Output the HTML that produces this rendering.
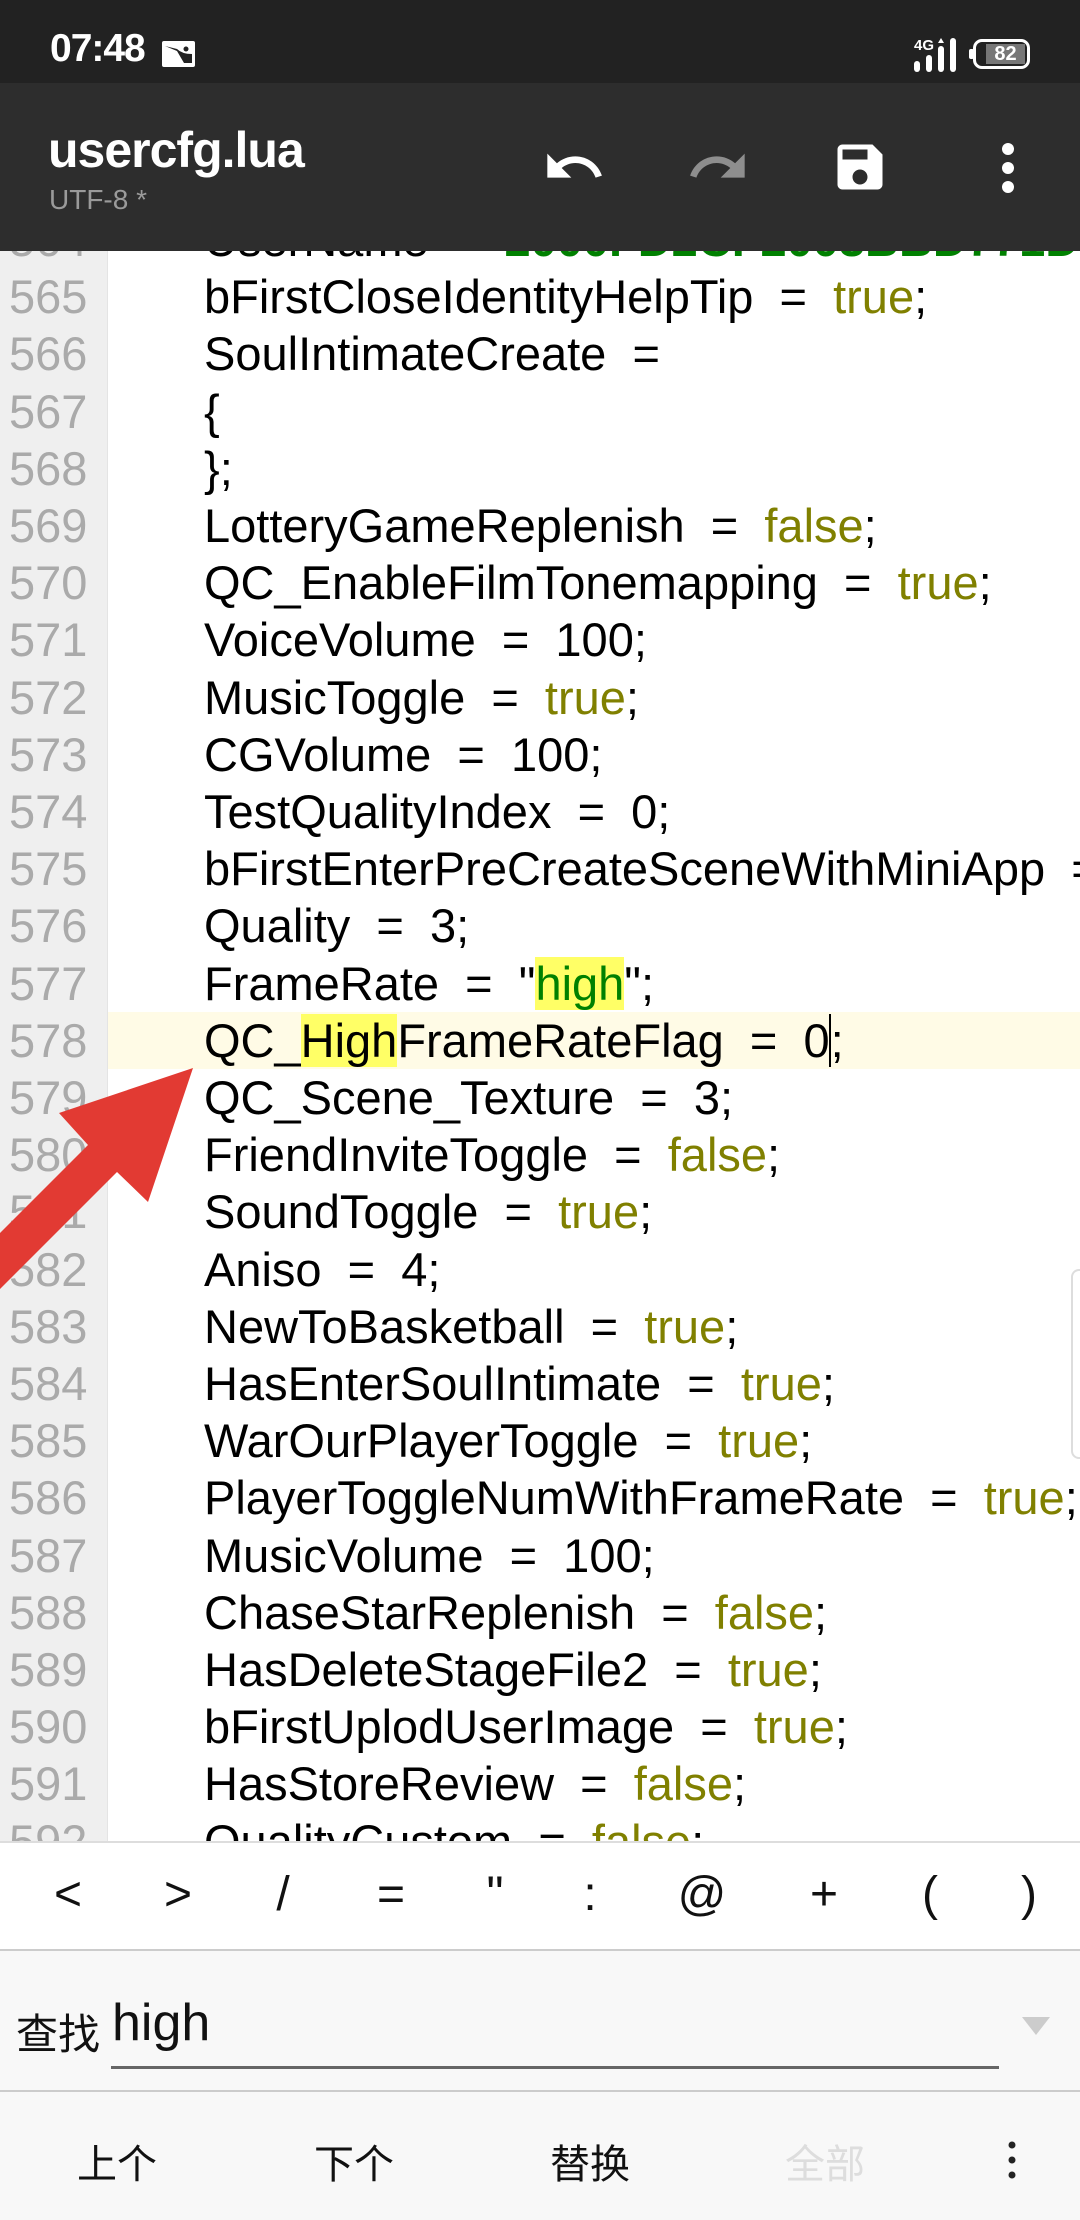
<!DOCTYPE html>
<html><head><meta charset="utf-8">
<style>
*{margin:0;padding:0;box-sizing:border-box}
body{width:1080px;height:2220px;overflow:hidden;background:#fff;font-family:"Liberation Sans","Noto Sans CJK SC",sans-serif;position:relative}
#sb{position:absolute;left:0;top:0;width:1080px;height:83px;background:#222}
#tb{position:absolute;left:0;top:83px;width:1080px;height:168px;background:#2d2d2d}
#code{position:absolute;left:0;top:251px;width:1080px;height:1590px;overflow:hidden;background:#fff}
#gut{position:absolute;left:0;top:0;width:108px;height:1590px;background:#efefef;border-right:1px solid #e4e4e4}
.ln{position:absolute;left:0;height:57.2px;width:1200px;font-size:47px;line-height:57.2px;white-space:pre}
.ln .n{position:absolute;left:9px;color:#aaa;width:98px;font-size:47px}
.ln .t{position:absolute;left:204px;color:#000}
.k{color:#808000}
.s{color:#008000}
.hl{background:#ffff66}
#cur{background:#fffbe6}
#sym{position:absolute;left:0;top:1841px;width:1080px;height:108px;background:#fff;border-top:2px solid #ddd}
#sym span{position:absolute;top:24px;font-size:48px;color:#111;transform:translateX(-50%)}
#find{position:absolute;left:0;top:1949px;width:1080px;height:143px;background:#f8f8f8;border-top:2px solid #ccc;border-bottom:2px solid #ccc}
#bot{position:absolute;left:0;top:2092px;width:1080px;height:128px;background:#f8f8f8}
#bot span{position:absolute;top:40px;font-size:40px;color:#111;transform:translateX(-50%)}
</style></head><body>
<div id="sb">
  <div style="position:absolute;left:50px;top:27px;color:#fff;font-size:39px;font-weight:bold;letter-spacing:-1px">07:48</div>
  <svg style="position:absolute;left:162px;top:41px" width="33" height="26" viewBox="0 0 33 26"><rect width="33" height="26" rx="2" fill="#fff"/><path d="M3 5 L15 10 L22 22 L30 22 L30 13 Q20 13 15 8 Z" fill="#222"/><circle cx="24" cy="8" r="2.5" fill="#222"/></svg>
  <div style="position:absolute;left:914px;top:37px;color:#fff;font-size:15px;font-weight:bold">4G</div>
  <svg style="position:absolute;left:914px;top:36px" width="46" height="36" viewBox="0 0 46 36"><rect x="0" y="25" width="6" height="11" rx="3" fill="#fff"/><rect x="12" y="19" width="6" height="17" rx="3" fill="#fff"/><rect x="24" y="10" width="6" height="26" rx="3" fill="#fff"/><path d="M24 7 L27 2 L30 7Z" fill="#fff"/><rect x="36" y="2" width="6" height="34" rx="3" fill="#fff"/></svg>
  <div style="position:absolute;left:973px;top:39px;width:57px;height:30px;border:3px solid #fff;border-radius:9px"></div>
  <div style="position:absolute;left:969px;top:49px;width:5px;height:10px;background:#fff;border-radius:2px"></div>
  <div style="position:absolute;left:986px;top:44px;width:39px;height:20px;background:#777;color:#fff;font-size:20px;line-height:20px;text-align:center;font-weight:bold">82</div>
</div>
<div id="tb">
  <div style="position:absolute;left:48px;top:38px;color:#fff;font-size:50px;font-weight:bold;letter-spacing:-1px">usercfg.lua</div>
  <div style="position:absolute;left:49px;top:101px;color:#9a9a9a;font-size:28px">UTF-8 *</div>
  <svg style="position:absolute;left:542px;top:52px" width="64" height="64" viewBox="0 0 24 24"><path fill="#fff" d="M12.5 8c-2.65 0-5.05.99-6.9 2.6L2 7v9h9l-3.620-3.62c1.39-1.16 3.16-1.88 5.12-1.88 3.54 0 6.55 2.31 7.6 5.5l2.37-.78C21.08 11.03 17.15 8 12.5 8z"/></svg>
  <svg style="position:absolute;left:686px;top:52px" width="64" height="64" viewBox="0 0 24 24"><path fill="#8e8e8e" d="M18.4 10.6C16.55 8.99 14.15 8 11.5 8c-4.65 0-8.58 3.03-9.960 7.22L3.9 16c1.05-3.19 4.05-5.5 7.6-5.5 1.95 0 3.73.72 5.12 1.88L13 16h9V7l-3.6 3.6z"/></svg>
  <svg style="position:absolute;left:830px;top:54px" width="60" height="60" viewBox="0 0 24 24"><path fill="#fff" d="M17 3H5c-1.11 0-2 .9-2 2v14c0 1.1.89 2 2 2h14c1.1 0 2-.9 2-2V7l-4-4zm-5 16c-1.66 0-3-1.34-3-3s1.34-3 3-3 3 1.34 3 3-1.34 3-3 3zm3-10H5V5h10v4z"/></svg>
  <svg style="position:absolute;left:996px;top:57px" width="24" height="56" viewBox="0 0 24 56"><circle cx="12" cy="9" r="6" fill="#fff"/><circle cx="12" cy="28" r="6" fill="#fff"/><circle cx="12" cy="47" r="6" fill="#fff"/></svg>
</div>
<div id="code">
  <div id="gut"></div>
  <div style="position:absolute;left:0;top:-40px;width:1080px">
    <div class="ln" style="top:0"><span class="n">564</span><span class="t">UserName = <span class="s" style="font-weight:bold">"2000FD2CF2003BBD771D0</span></span></div>
    <div class="ln" style="top:57.2px"><span class="n">565</span><span class="t">bFirstCloseIdentityHelpTip  =  <span class="k">true</span>;</span></div>
    <div class="ln" style="top:114.4px"><span class="n">566</span><span class="t">SoulIntimateCreate  =</span></div>
    <div class="ln" style="top:171.6px"><span class="n">567</span><span class="t">{</span></div>
    <div class="ln" style="top:228.8px"><span class="n">568</span><span class="t">};</span></div>
    <div class="ln" style="top:286px"><span class="n">569</span><span class="t">LotteryGameReplenish  =  <span class="k">false</span>;</span></div>
    <div class="ln" style="top:343.2px"><span class="n">570</span><span class="t">QC_EnableFilmTonemapping  =  <span class="k">true</span>;</span></div>
    <div class="ln" style="top:400.4px"><span class="n">571</span><span class="t">VoiceVolume  =  100;</span></div>
    <div class="ln" style="top:457.6px"><span class="n">572</span><span class="t">MusicToggle  =  <span class="k">true</span>;</span></div>
    <div class="ln" style="top:514.8px"><span class="n">573</span><span class="t">CGVolume  =  100;</span></div>
    <div class="ln" style="top:572px"><span class="n">574</span><span class="t">TestQualityIndex  =  0;</span></div>
    <div class="ln" style="top:629.2px"><span class="n">575</span><span class="t">bFirstEnterPreCreateSceneWithMiniApp  =</span></div>
    <div class="ln" style="top:686.4px"><span class="n">576</span><span class="t">Quality  =  3;</span></div>
    <div class="ln" style="top:743.6px"><span class="n">577</span><span class="t">FrameRate  =  "<span class="s hl">high</span>";</span></div>
    <div class="ln" id="cur" style="top:800.8px;left:108px"><span class="n" style="left:-99px">578</span><span class="t" style="left:96px">QC_<span class="hl">High</span>FrameRateFlag  =  0<span style="border-left:2px solid #000;margin-left:-1px"></span>;</span></div>
    <div class="ln" style="top:858px"><span class="n">579</span><span class="t">QC_Scene_Texture  =  3;</span></div>
    <div class="ln" style="top:915.2px"><span class="n">580</span><span class="t">FriendInviteToggle  =  <span class="k">false</span>;</span></div>
    <div class="ln" style="top:972.4px"><span class="n">581</span><span class="t">SoundToggle  =  <span class="k">true</span>;</span></div>
    <div class="ln" style="top:1029.6px"><span class="n">582</span><span class="t">Aniso  =  4;</span></div>
    <div class="ln" style="top:1086.8px"><span class="n">583</span><span class="t">NewToBasketball  =  <span class="k">true</span>;</span></div>
    <div class="ln" style="top:1144px"><span class="n">584</span><span class="t">HasEnterSoulIntimate  =  <span class="k">true</span>;</span></div>
    <div class="ln" style="top:1201.2px"><span class="n">585</span><span class="t">WarOurPlayerToggle  =  <span class="k">true</span>;</span></div>
    <div class="ln" style="top:1258.4px"><span class="n">586</span><span class="t">PlayerToggleNumWithFrameRate  =  <span class="k">true</span>;</span></div>
    <div class="ln" style="top:1315.6px"><span class="n">587</span><span class="t">MusicVolume  =  100;</span></div>
    <div class="ln" style="top:1372.8px"><span class="n">588</span><span class="t">ChaseStarReplenish  =  <span class="k">false</span>;</span></div>
    <div class="ln" style="top:1430px"><span class="n">589</span><span class="t">HasDeleteStageFile2  =  <span class="k">true</span>;</span></div>
    <div class="ln" style="top:1487.2px"><span class="n">590</span><span class="t">bFirstUplodUserImage  =  <span class="k">true</span>;</span></div>
    <div class="ln" style="top:1544.4px"><span class="n">591</span><span class="t">HasStoreReview  =  <span class="k">false</span>;</span></div>
    <div class="ln" style="top:1601.6px"><span class="n">592</span><span class="t">QualityCustom  =  <span class="k">false</span>;</span></div>
  </div>
  <div style="position:absolute;left:1071px;top:1018px;width:20px;height:190px;border:2px solid #ddd;border-radius:8px;background:#fff"></div>
</div>
<svg style="position:absolute;left:0;top:0" width="1080" height="2220" viewBox="0 0 1080 2220"><polygon points="193,1068 148,1202 117,1172 0,1289 0,1233 88,1145 59,1113" fill="#e23a33"/></svg>
<div id="sym">
  <span style="left:68px">&lt;</span><span style="left:178px">&gt;</span><span style="left:283px">/</span><span style="left:391px">=</span><span style="left:495px">"</span><span style="left:590px">:</span><span style="left:702px">@</span><span style="left:824px">+</span><span style="left:930px">(</span><span style="left:1029px">)</span>
</div>
<div id="find">
  <div style="position:absolute;left:16px;top:50px;font-size:42px;color:#111">查找</div>
  <div style="position:absolute;left:112px;top:42px;font-size:52px;color:#111">high</div>
  <div style="position:absolute;left:111px;top:115px;width:888px;height:3px;background:#666"></div>
  <svg style="position:absolute;left:1022px;top:66px" width="28" height="20" viewBox="0 0 28 20"><path d="M0 0 H28 L14 18Z" fill="#ccc"/></svg>
</div>
<div id="bot">
  <span style="left:117px">上个</span><span style="left:354px">下个</span><span style="left:590px">替换</span><span style="left:825px;color:#ddd">全部</span>
  <svg style="position:absolute;left:1005px;top:48px" width="14" height="40" viewBox="0 0 14 40"><circle cx="7" cy="5" r="3.5" fill="#222"/><circle cx="7" cy="20" r="3.5" fill="#222"/><circle cx="7" cy="35" r="3.5" fill="#222"/></svg>
</div>
</body></html>
